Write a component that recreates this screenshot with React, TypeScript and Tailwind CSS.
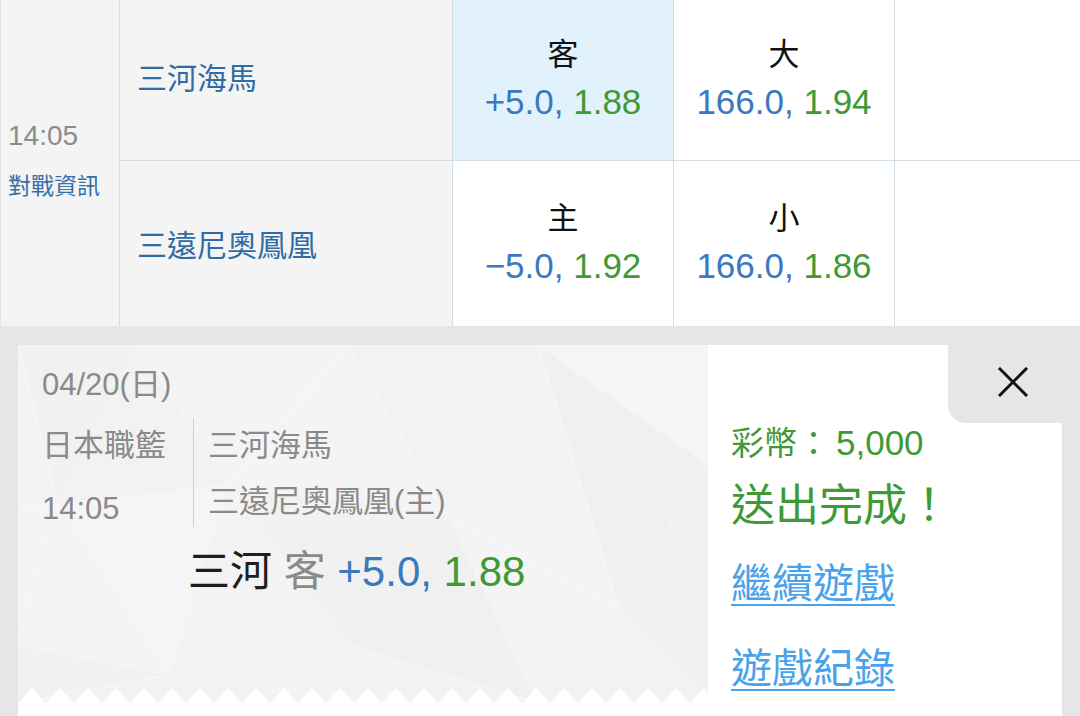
import React from 'react';

const font = "font-['Liberation_Sans','Noto_Sans_CJK_TC',sans-serif]";

interface OddsCellProps {
  label: string;
  line: string;
  price: string;
  active?: boolean;
  last?: boolean;
}

const OddsCell: React.FC<OddsCellProps> = ({ label, line, price, active, last }) => {
  return (
    <div
      className={`flex flex-col items-center justify-center border-r border-[#d3dde7] ${last ? '' : 'border-b'} ${active ? 'bg-[#e2f2fc]' : 'bg-white'}`}
    >
      <span className="text-[31px] leading-[40px] text-[#111]">{label}</span>
      <span className="text-[35px] leading-[46px] mt-[4px]">
        <span className="text-[#3a78bf]">{line}, </span>
        <span className="text-[#3f9a36]">{price}</span>
      </span>
    </div>
  );
};

const LowPoly: React.FC = () => {
  const polys = [
    { p: '0,0 120,0 40,160', f: '#f1f1f1' },
    { p: '120,0 330,0 210,140', f: '#f4f4f4' },
    { p: '40,160 120,0 210,140', f: '#f2f2f2' },
    { p: '330,0 520,0 430,170', f: '#f2f2f2' },
    { p: '520,0 690,0 690,120', f: '#f5f5f5' },
    { p: '520,0 690,120 600,260', f: '#f0f0f0' },
    { p: '210,140 330,0 430,170', f: '#f4f4f4' },
    { p: '0,160 40,160 0,300', f: '#f4f4f4' },
    { p: '40,160 210,140 150,330', f: '#f5f5f5' },
    { p: '210,140 430,170 330,300', f: '#f1f1f1' },
    { p: '430,170 600,260 520,358', f: '#f4f4f4' },
    { p: '430,170 520,0 600,260', f: '#f3f3f3' },
    { p: '600,260 690,120 690,358', f: '#f1f1f1' },
    { p: '0,300 150,330 0,358', f: '#f1f1f1' },
    { p: '150,330 330,300 380,358', f: '#f3f3f3' },
    { p: '330,300 430,170 520,358', f: '#f0f0f0' },
  ];
  const teeth = Array.from({ length: 26 }, (_, i) => i);
  return (
    <svg className="absolute inset-0 w-full h-full" viewBox="0 0 690 371" preserveAspectRatio="none">
      <rect x="0" y="0" width="690" height="371" fill="#f3f3f3" />
      {polys.map((t, i) => (
        <polygon key={i} points={t.p} fill={t.f} stroke="#f7f7f7" strokeWidth="1" />
      ))}
      {teeth.map((i) => (
        <polygon key={`t-${i}`} points={`${i * 28},359 ${i * 28 + 14},343 ${i * 28 + 28},359`} fill="#ffffff" />
      ))}
      <rect x="0" y="358" width="690" height="13" fill="#ffffff" />
    </svg>
  );
};

export default function App() {
  return (
    <div className={`w-[1080px] h-[716px] overflow-hidden bg-white ${font}`}>
      {/* odds table */}
      <div className="grid grid-cols-[120px_333px_221px_221px_1fr] grid-rows-[161px_165px]">
        <div className="row-span-2 flex flex-col justify-center pl-[7px] pb-[8px] bg-[#f4f4f4] border-r border-[#d3dde7] border-l border-l-[#e4e4e4]">
          <span className="text-[28px] leading-[36px] text-[#8c8c8c]">14:05</span>
          <span className="text-[23px] leading-[30px] mt-[17px] text-[#3570a8]">對戰資訊</span>
        </div>
        <div className="flex items-center pl-[17px] pb-[4px] bg-[#f4f4f4] border-r border-b border-[#d3dde7]">
          <span className="text-[30px] text-[#2f6ca6]">三河海馬</span>
        </div>
        <OddsCell label="客" line="+5.0" price="1.88" active />
        <OddsCell label="大" line="166.0" price="1.94" />
        <div className="bg-white border-b border-[#d3dde7]" />
        <div className="flex items-center pl-[17px] pt-[4px] bg-[#f4f4f4] border-r border-[#d3dde7]">
          <span className="text-[30px] text-[#2f6ca6]">三遠尼奧鳳凰</span>
        </div>
        <OddsCell label="主" line="−5.0" price="1.92" last />
        <OddsCell label="小" line="166.0" price="1.86" last />
        <div className="bg-white" />
      </div>

      {/* confirmation */}
      <div className="bg-[#e6e6e6] pt-[19px] pl-[18px] pr-[18px] h-[390px]">
        <div className="flex h-full">
          <div className="relative w-[690px] h-full">
            <LowPoly />
            <div className="relative pl-[24px] pt-[22px]">
              <div className="text-[31px] leading-[36px] text-[#8a8a8a]">04/20(日)</div>
              <div className="flex mt-[15px]">
                <div className="flex flex-col pt-[10px] pr-[27px]">
                  <span className="text-[31px] leading-[36px] text-[#8a8a8a]">日本職籃</span>
                  <span className="text-[31px] leading-[36px] mt-[27px] text-[#8a8a8a]">14:05</span>
                </div>
                <div className="flex flex-col pt-[10px] pl-[14px] border-l border-[#cfcfcf]">
                  <span className="text-[31px] leading-[36px] text-[#8a8a8a]">三河海馬</span>
                  <span className="text-[31px] leading-[36px] mt-[20px] text-[#8a8a8a]">三遠尼奧鳳凰(主)</span>
                </div>
              </div>
              <div className="ml-[146px] mt-[20px] text-[42px] leading-[50px]">
                <span className="text-[#1e1e1e]">三河 </span>
                <span className="text-[#8a8a8a]">客 </span>
                <span className="text-[#3a78bf]">+5.0, </span>
                <span className="text-[#3f9a36]">1.88</span>
              </div>
            </div>
          </div>
          <div className="flex-1 flex flex-col bg-white">
            <div className="self-end w-[114px] h-[78px] bg-[#e6e6e6] rounded-bl-[18px] flex items-center justify-center">
              <svg width="30" height="30" viewBox="0 0 30 30" className="ml-[16px] mt-[-4px]">
                <path d="M2 2 L28 28 M28 2 L2 28" stroke="#111" strokeWidth="3" strokeLinecap="square" />
              </svg>
            </div>
            <div className="pl-[23px] flex flex-col">
              <span className="text-[33px] leading-[40px] text-[#3f9a36]">
                彩幣：<span className="ml-[6px] text-[35px]">5,000</span>
              </span>
              <span className="text-[44px] leading-[52px] mt-[16px] text-[#3f9a36]">送出完成！</span>
              <a href="#" className="self-start text-[41px] leading-[46px] mt-[29px] text-[#4aa3ea] underline underline-offset-[6px] decoration-2">繼續遊戲</a>
              <a href="#" className="self-start text-[41px] leading-[46px] mt-[39px] text-[#4aa3ea] underline underline-offset-[6px] decoration-2">遊戲紀錄</a>
            </div>
          </div>
        </div>
      </div>
    </div>
  );
}
